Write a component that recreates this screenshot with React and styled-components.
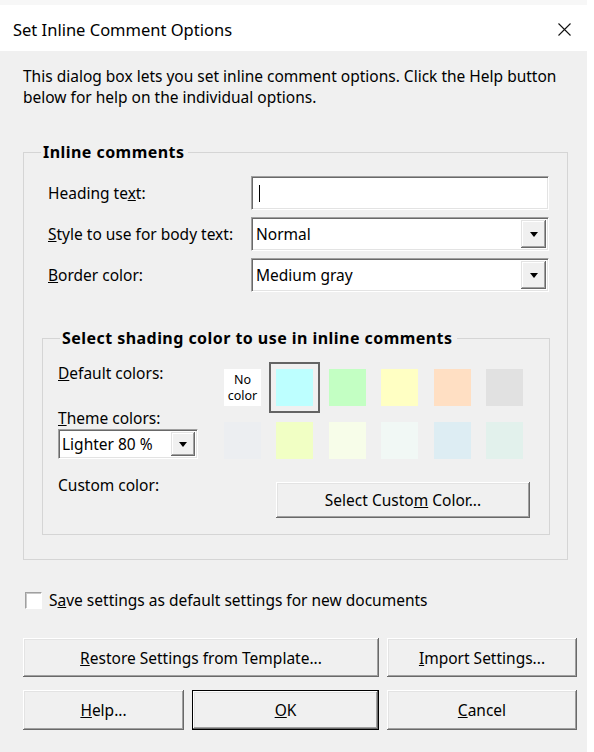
import React from "react";
import styled, { createGlobalStyle } from "styled-components";

const FONT = `"Noto Sans", "Liberation Sans", sans-serif`;

const Global = createGlobalStyle`
  html, body { margin: 0; padding: 0; background: #ffffff; }
  body { font-family: ${FONT}; font-size: 15.5px; color: #000; }
  *, *::before, *::after { box-sizing: border-box; }
`;

const Window = styled.div`
  width: 587px;
  min-height: 752px;
  background: #f0f0f0;
  display: flex;
  flex-direction: column;
  border-top: 5px solid #f7f7f7;
`;

const TitleBar = styled.div`
  height: 46px;
  background: #ffffff;
  display: flex;
  align-items: center;
  justify-content: space-between;
  padding: 2px 16px 0 13px;
  font-size: 16.5px;
`;

const Body = styled.div`
  padding: 15px 0 0 23px;
  display: flex;
  flex-direction: column;
`;

const Intro = styled.p`
  margin: 0;
  line-height: 21px;
  width: 548px;
`;

const Group = styled.fieldset`
  margin: ${(p) => p.$margin};
  padding: 0 0 ${(p) => p.$padBottom || "0px"} 0;
  border: 1px solid #d5d5d5;
  min-width: 0;
`;

const Legend = styled.legend`
  margin-left: 17px;
  padding: 0 4px 0 2px;
  font-weight: bold;
  font-size: 16px;
  letter-spacing: 0.45px;
  line-height: 20px;
`;

const FieldGrid = styled.div`
  margin-top: 14px;
  padding: 0 17px 0 24px;
  display: grid;
  grid-template-columns: 203px 298px;
  grid-auto-rows: 34px;
  row-gap: 7px;
  align-items: center;
`;

const Label = styled.span`
  line-height: 20px;
  white-space: nowrap;
`;

const Sunken = styled.div`
  height: ${(p) => p.$h || "34px"};
  width: ${(p) => p.$w || "auto"};
  background: #ffffff;
  border-top: 1px solid #a0a0a0;
  border-left: 1px solid #a0a0a0;
  border-right: 1px solid #ffffff;
  border-bottom: 1px solid #ffffff;
  box-shadow: inset 1px 1px 0 #696969, inset -1px -1px 0 #e3e3e3;
  display: flex;
  align-items: center;
  padding: 2px 2px 2px 4px;
`;

const Caret = styled.span`
  width: 1px;
  height: 17px;
  background: #000;
  margin-left: 3px;
`;

const ComboText = styled.span`
  flex: 1;
  white-space: nowrap;
  color: #000;
`;

const DropButton = styled.span`
  width: ${(p) => p.$w || "25px"};
  align-self: stretch;
  background: #f0f0f0;
  box-shadow: inset -1px -1px 0 #696969, inset 1px 1px 0 #e3e3e3,
    inset -2px -2px 0 #a0a0a0, inset 2px 2px 0 #ffffff;
  display: flex;
  align-items: center;
  justify-content: center;
`;

const Arrow = () => (
  <svg width="8" height="5" viewBox="0 0 8 5">
    <path d="M0 0H8L4 5Z" fill="#000" />
  </svg>
);

const ShadingBody = styled.div`
  display: grid;
  grid-template-columns: 166px auto;
  padding-left: 15px;
`;

const LeftCol = styled.div`
  display: flex;
  flex-direction: column;
  padding-top: 15px;
`;

const RightCol = styled.div`
  display: flex;
  flex-direction: column;
  padding-top: 21px;
`;

const Swatches = styled.div`
  display: grid;
  grid-template-columns: repeat(6, 37px);
  grid-auto-rows: 37px;
  column-gap: 15.4px;
  row-gap: 16px;
`;

const Swatch = styled.div`
  background: ${(p) => p.$c};
  ${(p) => (p.$selected ? "outline: 2px solid #646464; outline-offset: 5px;" : "")}
`;

const NoColor = styled.div`
  background: #ffffff;
  font-size: 12.5px;
  line-height: 16px;
  display: flex;
  flex-direction: column;
  align-items: center;
  justify-content: center;
  text-align: center;
`;

const Raised = styled.button`
  font: inherit;
  color: #000;
  background: #f0f0f0;
  border: ${(p) => (p.$default ? "1px solid #000" : "none")};
  padding: 0;
  margin: 0;
  box-shadow: inset -1px -1px 0 #696969, inset 1px 1px 0 #ffffff,
    inset -2px -2px 0 #a0a0a0, inset 2px 2px 0 #e3e3e3;
  grid-column: ${(p) => p.$span || "auto"};
  display: flex;
  align-items: center;
  justify-content: center;
  white-space: nowrap;
`;

const CustomButton = styled(Raised)`
  margin: 23px 0 0 52px;
  width: 254px;
  height: 36px;
`;

const CheckRow = styled.label`
  margin: 30px 0 0 2px;
  display: flex;
  align-items: center;
  gap: 7px;
  height: 20px;
`;

const CheckBox = styled.span`
  width: 17px;
  height: 17px;
  background: #ffffff;
  border-top: 1px solid #a0a0a0;
  border-left: 1px solid #a0a0a0;
  border-right: 1px solid #ffffff;
  border-bottom: 1px solid #ffffff;
  box-shadow: inset 1px 1px 0 #c8c8c8;
`;

const ButtonGrid = styled.div`
  margin-top: 28px;
  display: grid;
  grid-template-columns: 161px 187px 190px;
  grid-template-rows: 39px 40px;
  column-gap: 8px;
  row-gap: 13px;
`;

const ThemeLabel = styled(Label)`
  margin-top: 25px;
`;

const CustomLabel = styled(Label)`
  margin-top: 16px;
`;

const ThemeCombo = styled(Sunken)`
  margin-top: 1px;
  padding-left: 3px;
`;

const CloseIcon = () => (
  <svg width="13" height="13" viewBox="0 0 13 13">
    <path d="M0.5 0.5L12.5 12.5M12.5 0.5L0.5 12.5" stroke="#111" strokeWidth="1.1" />
  </svg>
);

const row1 = ["#bdffff", "#c3ffc3", "#ffffc3", "#ffdfc3", "#e1e1e1"];
const row2 = ["#eceef1", "#f1ffc4", "#f7fde9", "#f1f8f5", "#ddedf3", "#e2f1ec"];

export default function App() {
  return (
    <>
      <Global />
      <Window>
        <TitleBar>
          <span>Set Inline Comment Options</span>
          <CloseIcon />
        </TitleBar>
        <Body>
          <Intro>
            This dialog box lets you set inline comment options. Click the Help button
            below for help on the individual options.
          </Intro>
          <Group $margin="34px 0 0 0" $padBottom="24px" style={{ width: 545 }}>
            <Legend>Inline comments</Legend>
            <FieldGrid>
              <Label>
                Heading te<u>x</u>t:
              </Label>
              <Sunken>
                <Caret />
              </Sunken>
              <Label>
                <u>S</u>tyle to use for body text:
              </Label>
              <Sunken>
                <ComboText>Normal</ComboText>
                <DropButton>
                  <Arrow />
                </DropButton>
              </Sunken>
              <Label>
                <u>B</u>order color:
              </Label>
              <Sunken>
                <ComboText>Medium gray</ComboText>
                <DropButton>
                  <Arrow />
                </DropButton>
              </Sunken>
            </FieldGrid>
            <Group $margin="36px 17px 0 18px" $padBottom="16px">
              <Legend>Select shading color to use in inline comments</Legend>
              <ShadingBody>
                <LeftCol>
                  <Label>
                    <u>D</u>efault colors:
                  </Label>
                  <ThemeLabel>
                    <u>T</u>heme colors:
                  </ThemeLabel>
                  <ThemeCombo $h="30px" $w="140px">
                    <ComboText>Lighter 80 %</ComboText>
                    <DropButton $w="24px">
                      <Arrow />
                    </DropButton>
                  </ThemeCombo>
                  <CustomLabel>Custom color:</CustomLabel>
                </LeftCol>
                <RightCol>
                  <Swatches>
                    <NoColor>
                      <span>No</span>
                      <span>color</span>
                    </NoColor>
                    {row1.map((c, i) => (
                      <Swatch key={c} $c={c} $selected={i === 0} />
                    ))}
                    {row2.map((c) => (
                      <Swatch key={c} $c={c} />
                    ))}
                  </Swatches>
                  <CustomButton>
                    <span>
                      Select Custo<u>m</u> Color...
                    </span>
                  </CustomButton>
                </RightCol>
              </ShadingBody>
            </Group>
          </Group>
          <CheckRow>
            <CheckBox />
            <span>
              S<u>a</u>ve settings as default settings for new documents
            </span>
          </CheckRow>
          <ButtonGrid>
            <Raised $span="1 / span 2">
              <span>
                <u>R</u>estore Settings from Template...
              </span>
            </Raised>
            <Raised>
              <span>
                <u>I</u>mport Settings...
              </span>
            </Raised>
            <Raised>
              <span>
                <u>H</u>elp...
              </span>
            </Raised>
            <Raised $default>
              <span>
                <u>O</u>K
              </span>
            </Raised>
            <Raised>
              <span>
                <u>C</u>ancel
              </span>
            </Raised>
          </ButtonGrid>
        </Body>
      </Window>
    </>
  );
}
